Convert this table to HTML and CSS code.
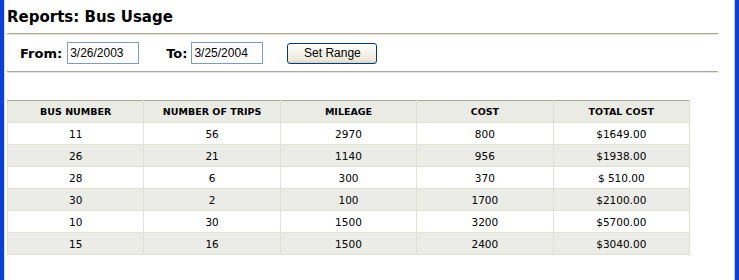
FILE: index.html
```html
<!DOCTYPE html>
<html>
<head>
<meta charset="utf-8">
<link rel="stylesheet" href="styles.css">
</head>
<body>
<div class="window">
  <div class="content">
    <h1 class="title">Reports: Bus Usage</h1>
    <div class="rule"></div>
    <div class="range">
      <label class="lbl">From:</label>
      <input class="date" type="text" value="3/26/2003">
      <label class="lbl lbl-to">To:</label>
      <input class="date" type="text" value="3/25/2004">
      <button class="btn">Set Range</button>
    </div>
    <div class="rule"></div>
    <table class="grid">
      <thead>
        <tr><th>BUS NUMBER</th><th>NUMBER OF TRIPS</th><th>MILEAGE</th><th>COST</th><th>TOTAL COST</th></tr>
      </thead>
      <tbody>
        <tr><td>11</td><td>56</td><td>2970</td><td>800</td><td>$1649.00</td></tr>
        <tr class="alt"><td>26</td><td>21</td><td>1140</td><td>956</td><td>$1938.00</td></tr>
        <tr><td>28</td><td>6</td><td>300</td><td>370</td><td>$ 510.00</td></tr>
        <tr class="alt"><td>30</td><td>2</td><td>100</td><td>1700</td><td>$2100.00</td></tr>
        <tr><td>10</td><td>30</td><td>1500</td><td>3200</td><td>$5700.00</td></tr>
        <tr class="alt"><td>15</td><td>16</td><td>1500</td><td>2400</td><td>$3040.00</td></tr>
      </tbody>
    </table>
  </div>
</div>
</body>
</html>
```
FILE: styles.css
```css
html, body {
  margin: 0;
  padding: 0;
  background: #fff;
}
.window {
  width: 739px;
  height: 280px;
  box-sizing: border-box;
  border-left: 4px solid #0a3fd8;
  border-right: 4px solid #0a3fd8;
  background: #fff;
  overflow: hidden;
}
.content {
  height: 100%;
  box-sizing: border-box;
  padding: 0 16px 0 2px;
  border-right: 1px solid #c8c8c8;
  border-left: 1px solid #d8d8d8;
  font-family: "DejaVu Sans", Verdana, sans-serif;
  color: #000;
}
.title {
  margin: 0;
  padding-top: 7px;
  height: 26px;
  font-size: 15px;
  font-weight: bold;
  line-height: 20px;
}
.rule {
  height: 0;
  border-top: 1px solid #aca899;
  border-bottom: 1px solid #e6e4da;
}
.range {
  display: flex;
  align-items: center;
  height: 36px;
  padding-left: 13px;
}
.lbl {
  font-weight: bold;
  font-size: 13px;
  margin-right: 5px;
}
.lbl-to {
  margin-left: 27px;
  margin-right: 4px;
}
.date {
  width: 72px;
  height: 22px;
  box-sizing: border-box;
  border: 1px solid #7f9db9;
  padding: 0 2px;
  font-family: "Liberation Sans", Arial, sans-serif;
  font-size: 12px;
  color: #000;
}
.btn {
  margin-left: 24px;
  width: 90px;
  height: 21px;
  border: 1px solid #003c74;
  border-radius: 3px;
  background: linear-gradient(#ffffff, #ece9d8 85%, #d6d0c5);
  font-family: "Liberation Sans", Arial, sans-serif;
  font-size: 12px;
  color: #000;
  padding: 0;
}
.grid {
  margin-top: 27px;
  border-collapse: collapse;
  width: 683px;
  table-layout: fixed;
  font-size: 10.5px;
  border-top: 1px solid #a8a898;
}
.grid th, .grid td {
  height: 21px;
  padding: 0;
  text-align: center;
  border: 1px solid #e2e0d2;
}
.grid th {
  font-size: 9.5px;
  font-weight: bold;
  background: #ebebe6;
  border-top: 1px solid #a8a898;
}
.grid tr.alt td {
  background: #ebebe7;
}
```
